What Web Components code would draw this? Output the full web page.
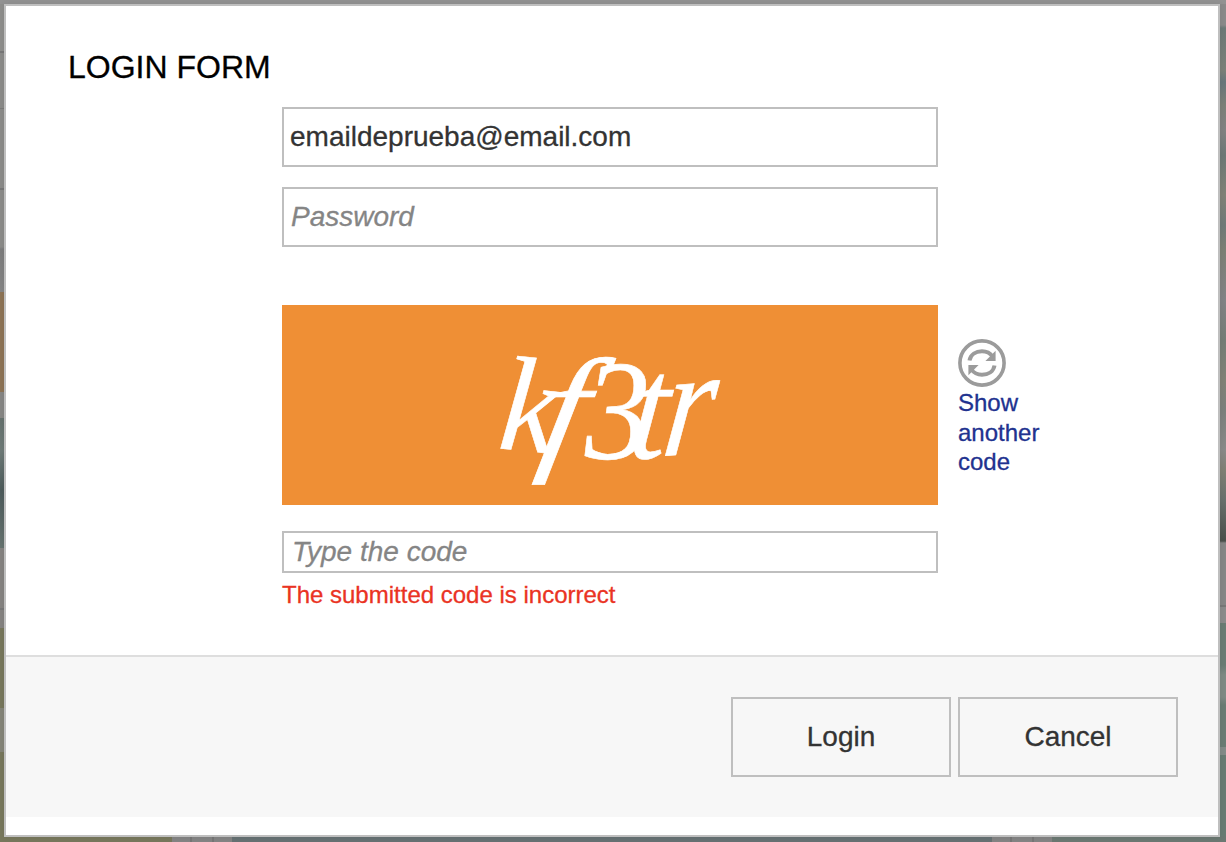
<!DOCTYPE html>
<html lang="en">
<head>
<meta charset="utf-8">
<title>Login form</title>
<style>
  html, body { margin: 0; height: 100%; overflow: hidden; }
  body { font-family: "Liberation Sans", Arial, Helvetica, sans-serif; color: #333; -webkit-text-stroke: .3px; }
</style>
</head>
<body>
<login-backdrop>
  <login-dialog>
    <span slot="title">LOGIN FORM</span>
    <text-field value="emaildeprueba@email.com"></text-field>
    <text-field type="password" placeholder="Password"></text-field>
    <captcha-row></captcha-row>
    <text-field compact placeholder="Type the code"></text-field>
    <field-error>The submitted code is incorrect</field-error>
    <dialog-button slot="actions">Login</dialog-button>
    <dialog-button slot="actions">Cancel</dialog-button>
  </login-dialog>
</login-backdrop>

<script>
const define = (name, html, setup) => customElements.define(name, class extends HTMLElement {
  constructor() {
    super();
    this.attachShadow({ mode: "open" }).innerHTML = html;
  }
  connectedCallback() { if (setup) setup(this, this.shadowRoot); }
});

define("text-field", `
  <style>
    :host { display: block; height: 60px; margin-bottom: 20px; }
    :host([compact]) { height: 42px; margin: 26px 0 0; }
    input { display: block; box-sizing: border-box; width: 100%; height: 100%; margin: 0;
      border: 2px solid #bfbfbf; border-radius: 0; padding: 0 6px; outline: 0;
      background: #fff; color: #333; font: 28px "Liberation Sans", Arial, sans-serif; }
    input::placeholder { color: #858585; font-style: italic; opacity: 1; text-indent: 1px; }
    :host([compact]) input::placeholder { text-indent: 2px; }
  </style>
  <input>`, (host, root) => {
    const input = root.querySelector("input");
    input.type = host.getAttribute("type") || "text";
    input.placeholder = host.getAttribute("placeholder") || "";
    input.value = host.getAttribute("value") || "";
  });

define("captcha-image", `
  <style>
    :host { display: block; width: 656px; height: 200px; background: #ef8f35; }
    svg { display: block; }
    text { font-family: "Liberation Serif", "Times New Roman", serif; font-style: italic; fill: #fff; stroke: #fff; stroke-width: .6px; -webkit-text-stroke: 0; }
  </style>
  <svg width="656" height="200" viewBox="0 0 656 200">
    <g filter="url(#soft)">
      <text font-size="135" transform="translate(215 143) rotate(6) scale(.95 1)">k</text>
      <text font-size="139" transform="translate(254 150) skewX(-11) scale(1.12 1)">f</text>
      <text font-size="142" transform="translate(303 154) scale(.92 1)">3</text>
      <text font-size="148" transform="translate(345 153) skewX(-6) scale(.9 1)">t</text>
      <text font-size="152" transform="translate(378 151) rotate(-4) skewX(-11) scale(.86 1)">r</text>
    </g>
    <filter id="soft" x="-10%" y="-20%" width="120%" height="140%"><feGaussianBlur stdDeviation="0.7"/></filter>
  </svg>`);

define("refresh-code", `
  <style>
    :host { display: block; width: 90px; color: #21328f; font-size: 24px; line-height: 29.6px; }
    svg { display: block; margin-bottom: 1px; filter: blur(.5px); }
  </style>
  <svg width="48" height="48" viewBox="0 0 48 48" fill="none" stroke="#9b9b9b">
    <circle cx="24" cy="24" r="22.1" stroke-width="3.6"/>
    <path d="M11.500 21.500C12.500 15.300 18 12.300 24 12.300c4.600 0 8 1.500 10.500 5.200" stroke-width="4"/>
    <path d="M36.500 26.500C35.500 32.700 30 35.700 24 35.700c-4.600 0-8-1.500-10.500-5.200" stroke-width="4"/>
    <path d="M37.600 11.800v10.200h-10.200zM10.400 36.200v-10.200h10.200z" fill="#9b9b9b" stroke="none"/>
  </svg>
  <slot></slot>`);

define("captcha-row", `
  <style>
    :host { display: flex; gap: 20px; width: 780px; margin-top: 58px; }
    refresh-code { margin-top: 34px; }
  </style>
  <captcha-image></captcha-image>
  <refresh-code>Show another code</refresh-code>`);

define("field-error", `
  <style>:host { display: block; margin-top: 8px; font-size: 24px; line-height: 28px; color: #ea3323; }</style>
  <slot></slot>`);

define("dialog-button", `
  <style>
    :host { display: block; width: 220px; height: 80px; }
    button { box-sizing: border-box; width: 100%; height: 100%; margin: 0; padding: 0;
      border: 2px solid #bfbfbf; background: #f7f7f7; color: #333;
      font: 28px "Liberation Sans", Arial, sans-serif; }
  </style>
  <button><slot></slot></button>`);

define("login-dialog", `
  <style>
    :host { display: flex; flex-direction: column; box-sizing: border-box; height: 833px;
      border: 2px solid #bfbfbf; background: #fff; box-shadow: 0 0 6px rgba(0,0,0,.08); }
    h1 { margin: 0 0 0 62px; padding-top: 42px; font-size: 32px; line-height: 38px; font-weight: 400; color: #000; }
    main { box-sizing: border-box; width: 656px; height: 548px; margin: 21px 0 0 276px; }
    footer { box-sizing: border-box; height: 162px; border-top: 2px solid #dedede; padding: 40px 40px 0 0;
      background: #f7f7f7; display: flex; justify-content: flex-end; gap: 7px; }
  </style>
  <h1><slot name="title"></slot></h1>
  <main><slot></slot></main>
  <footer><slot name="actions"></slot></footer>`);

define("login-backdrop", `
  <style>
    :host { display: block; box-sizing: border-box; height: 842px; padding: 4px 6px 5px 4px;
      background:
        linear-gradient(90deg, #77775c 172px, #848484 172px 190px, #767676 190px 192px, #848484 192px 212px, #767676 212px 214px, #848484 214px 232px, #667173 232px 992px, #848484 992px 1010px, #767676 1010px 1012px, #848484 1012px 1032px, #767676 1032px 1034px, #848484 1034px 1052px, #6b7872 1052px) 0 100% / 1226px 6px no-repeat,
        linear-gradient(#929292, #929292) 0 0 / 1226px 4px no-repeat,
        linear-gradient(#8e8e8c 51px, #777 51px 53px, #8b8b89 53px 108px, #7b7b79 108px 109px, #8b8b89 109px 188px, #777 188px 190px, #8b8b89 190px 247px, #7c7c7c 249px, #858585 292px, #8d7355 292px 392px, #868684 392px 418px, #65716d 418px, #6d7976 450px, #4d5b5b 490px, #66736f 548px, #858381 548px 608px, #777 608px 610px, #858381 610px 628px, #77775c 628px 708px, #858578 708px 752px, #77775c 752px) 0 0 / 4px 842px no-repeat,
        linear-gradient(#8a8a8a 25px, #6c7977 28px, #7b8179 70px, #68767b 82px, #7c8078 105px, #828282 130px, #6d7876 155px, #818277 195px, #6f7a78 225px, #7c8075 250px, #828386 300px, #747d76 340px, #818276 380px, #7b807c 410px, #8a8a89 450px, #808074 470px, #69716d 500px, #4a504b 541px, #868686 543px 605px, #777 605px 607px, #8b8b8b 607px 623px, #6a7c74 623px 665px, #7e8a84 675px 697px, #6a7c74 705px 747px, #838b88 747px 755px, #687b73 755px) 100% 0 / 6px 842px no-repeat; }
  </style>
  <slot></slot>`);
</script>
</body>
</html>
